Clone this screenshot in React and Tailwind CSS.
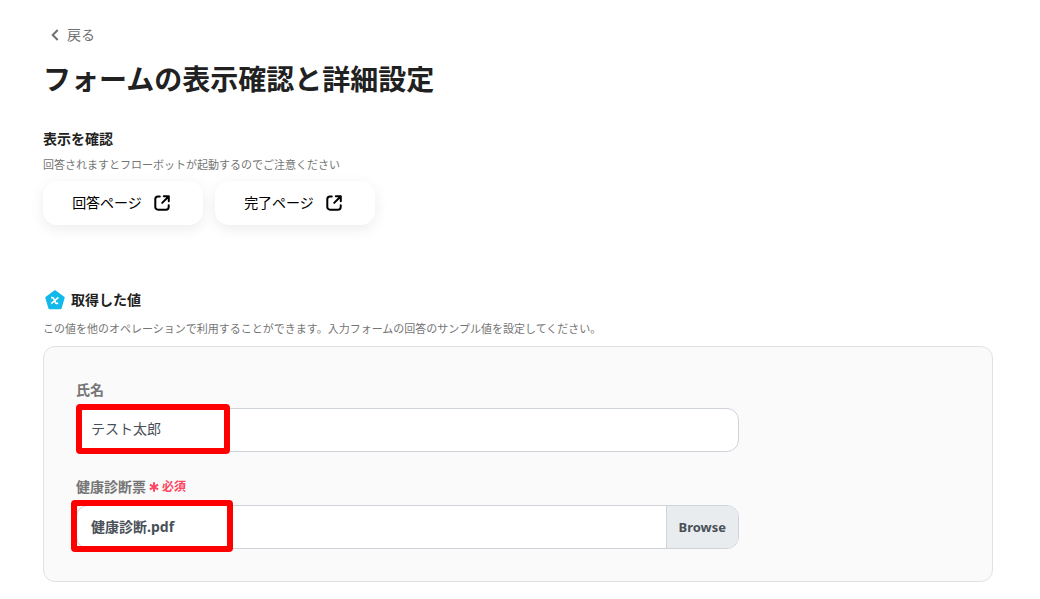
import { useRef, useState } from "react";

function ExternalIcon() {
  return (
    <svg viewBox="0 0 16 16" className="size-4 shrink-0" fill="none" stroke="currentColor" strokeWidth="2" strokeLinecap="round" strokeLinejoin="round" aria-hidden="true">
      <path d="M5.8 1.5H4A2.7 2.7 0 0 0 1.3 4.2V12A2.7 2.7 0 0 0 4 14.7h8a2.7 2.7 0 0 0 2.7-2.7v-1.8" />
      <path d="M9.8 1.3h5v5M14.3 1.8 8.2 7.9" />
    </svg>
  );
}

function PreviewLink({ children }) {
  return (
    <a href="#preview" className="flex h-11 w-40 items-center justify-center gap-3 rounded-[14px] bg-white pr-1 text-sm text-black shadow-[0_4px_14px_rgba(0,0,0,0.08)]">
      {children}
      <ExternalIcon />
    </a>
  );
}

function ValueIcon() {
  return (
    <svg viewBox="0 0 20 20" className="size-5 shrink-0" aria-hidden="true">
      <path d="M10 1.6 18.4 7.7 15.4 18H4.6L1.6 7.7Z" fill="#12b9ea" stroke="#12b9ea" strokeWidth="2.6" strokeLinejoin="round" />
      <path d="M6 7.6h1.2q.9 0 1.3.8l2 4.2q.4.8 1.3.8h1.4M13.4 7.4 6.2 13.6" fill="none" stroke="#fff" strokeWidth="1.6" />
    </svg>
  );
}

export default function App() {
  const fileRef = useRef(null);
  const [fileName, setFileName] = useState("健康診断.pdf");

  return (
    <main className="bg-white pt-[25px] pr-[47px] pb-4 pl-[43px] font-['Noto_Sans','Noto_Sans_CJK_JP',sans-serif] text-[#212121]">
      <a href="#back" className="ml-2 flex h-5 w-fit items-center gap-2 text-sm text-[#707070]">
        <svg viewBox="0 0 8 12" className="h-3 w-2" fill="none" stroke="currentColor" strokeWidth="2" aria-hidden="true">
          <path d="M6.7 1 1.7 6l5 5" />
        </svg>
        戻る
      </a>
      <h1 className="mt-[14px] text-[28px] leading-10 font-bold">フォームの表示確認と詳細設定</h1>

      <section className="mt-[30px]">
        <h2 className="text-sm leading-5 font-bold">表示を確認</h2>
        <p className="mt-2 text-[11px] leading-4 text-[#757575]">回答されますとフローボットが起動するのでご注意ください</p>
        <div className="mt-2 flex gap-3">
          <PreviewLink>回答ページ</PreviewLink>
          <PreviewLink>完了ページ</PreviewLink>
        </div>
      </section>

      <section className="mt-[65px]">
        <h2 className="flex items-center gap-1.5 pl-0.5 text-sm leading-5 font-bold">
          <ValueIcon />
          取得した値
        </h2>
        <p className="mt-[11px] text-[11px] leading-4 text-[#757575]">
          この値を他のオペレーションで利用することができます。入力フォームの回答のサンプル値を設定してください。
        </p>

        <form className="mt-[9px] flex flex-col gap-6 rounded-xl border border-[#dee2e6] bg-[#fafafa] p-8">
          <div className="w-3/4">
            <label htmlFor="name" className="block text-sm leading-[21px] font-bold text-[#757575]">氏名</label>
            <div className="relative mt-2">
              <input
                id="name"
                defaultValue="テスト太郎"
                className="block h-11 w-full rounded-xl border border-[#ced4da] bg-white px-3.5 pb-1 text-sm text-[#495057] outline-none"
              />
              <div className="pointer-events-none absolute -top-1 left-0 h-[50px] w-[154px] rounded-[4px] border-6 border-[#ff0000]" />
            </div>
          </div>

          <div className="w-3/4">
            <label htmlFor="file" className="flex h-[21px] items-center gap-[3px] text-sm font-bold text-[#757575]">
              健康診断票
              <svg viewBox="0 0 10 10" className="size-2.5" stroke="#ff4560" strokeWidth="2" aria-hidden="true">
                <path d="M5 .3v9.4M.9 2.6l8.2 4.8M.9 7.4l8.2-4.8" />
              </svg>
              <span className="text-xs text-[#ff4560]">必須</span>
            </label>
            <div className="relative mt-2">
              <div className="flex h-11 overflow-hidden rounded-xl border border-[#ced4da] bg-white text-sm font-bold text-[#495057]">
                <span className="flex min-w-0 flex-1 items-center truncate px-3.5">{fileName}</span>
                <input
                  id="file"
                  ref={fileRef}
                  type="file"
                  required
                  className="sr-only"
                  onChange={(e) => e.target.files[0] && setFileName(e.target.files[0].name)}
                />
                <button
                  type="button"
                  onClick={() => fileRef.current.click()}
                  className="border-l border-[#ced4da] bg-[#e9ecef] px-3 text-[13px]"
                >
                  Browse
                </button>
              </div>
              <div className="pointer-events-none absolute -top-[5px] -left-[5px] h-[52px] w-[162px] rounded-[4px] border-6 border-[#ff0000]" />
            </div>
          </div>
        </form>
      </section>
    </main>
  );
}
